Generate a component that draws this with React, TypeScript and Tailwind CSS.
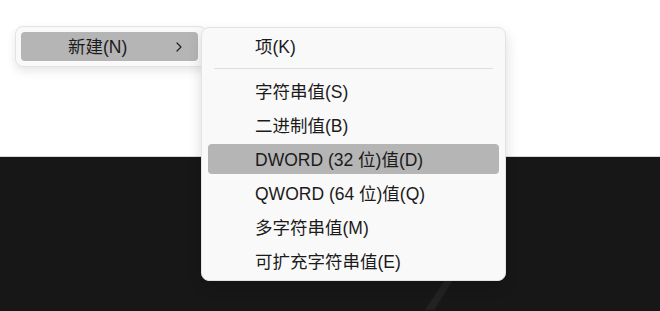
import { ChevronRight } from 'lucide-react';

const font = { fontFamily: '"Liberation Sans", "Noto Sans CJK SC", sans-serif' };

const items = [
  { label: '字符串值(S)' },
  { label: '二进制值(B)' },
  { label: 'DWORD (32 位)值(D)', active: true },
  { label: 'QWORD (64 位)值(Q)' },
  { label: '多字符串值(M)' },
  { label: '可扩充字符串值(E)' },
];

const MenuRow = ({ label, active }: { label: string; active?: boolean }) => (
  <div className="py-[2px]">
    <div
      className={`h-[30px] flex items-center pl-[47px] pt-[2px] rounded-[4px] text-[17.5px] text-[#1b1b1b] ${
        active ? 'bg-[#b5b5b5]' : ''
      }`}
    >
      {label}
    </div>
  </div>
);

export default function App() {
  return (
    <div className="relative w-[660px] h-[311px] overflow-hidden bg-white" style={font}>
      {/* backdrop: white window above, dark desktop below */}
      <div className="flex flex-col h-full">
        <div className="h-[157px] bg-white border-b border-[#d8d8d8]" />
        <div className="flex-1 bg-[#171717]">
          <svg width="660" height="153" className="block">
            <path d="M425 153 L448 118 L456 118 L434 153 Z" fill="#222222" />
          </svg>
        </div>
      </div>

      {/* parent menu */}
      <div className="absolute left-[15px] top-[26px] w-[192px] h-[41px] p-[5px] rounded-lg bg-[#f9f9f9] border border-[#e3e3e3] shadow-[0_4px_10px_rgba(0,0,0,0.10)]">
        <div className="h-[29px] w-[177px] rounded-[4px] bg-[#b5b5b5] flex items-center text-[17.5px] text-[#1b1b1b]">
          <span className="pl-[47px] pt-[2px] flex-1">新建(N)</span>
          <ChevronRight className="w-[16px] h-[16px] mr-[11px] text-[#222]" strokeWidth={1.8} />
        </div>
      </div>

      {/* submenu */}
      <div className="absolute left-[201px] top-[27px] w-[305px] h-[254px] px-[6px] pt-[1px] pb-[2px] rounded-lg bg-[#f9f9f9] border border-[#e3e3e3] shadow-[0_6px_14px_rgba(0,0,0,0.14)]">
        <MenuRow label="项(K)" />
        <div className="h-[11px] flex items-center px-[6px]">
          <div className="h-px w-full bg-[#dedede]" />
        </div>
        {items.map((it) => (
          <MenuRow key={it.label} label={it.label} active={it.active} />
        ))}
      </div>
    </div>
  );
}
